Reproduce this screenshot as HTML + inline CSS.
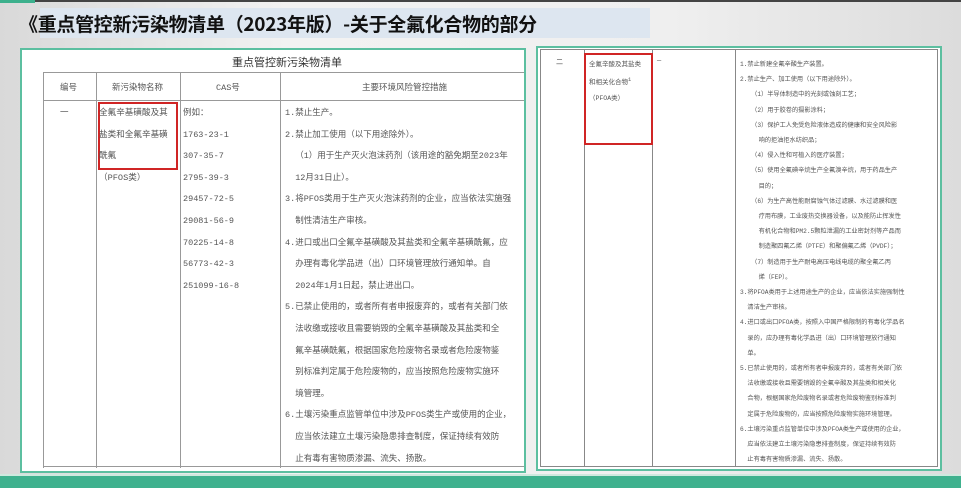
<!DOCTYPE html>
<html><head><meta charset="utf-8"><style>
*{margin:0;padding:0;box-sizing:border-box}
body{width:961px;height:488px;overflow:hidden;position:relative;background:linear-gradient(90deg,#d9d9d9,#f2f2f2 30%,#efefef 70%,#dcdcdc);font-family:"Liberation Sans","Noto Sans CJK SC",sans-serif}
.abs{position:absolute}
.t{position:absolute;font-family:"Liberation Mono","Noto Sans CJK SC",monospace;color:#555;white-space:nowrap}
</style></head><body>
<div class="abs" style="left:0;top:0;width:961px;height:2px;background:#444"></div>
<div class="abs" style="left:0;top:0;width:35px;height:3px;background:#3cb08c"></div>
<div class="abs" style="left:40px;top:8px;width:610px;height:30px;background:#dde6f0"></div>
<div class="abs" style="left:19px;top:10px;font-size:19px;font-weight:bold;color:#111;font-family:'Noto Sans CJK SC',sans-serif;letter-spacing:-0.3px">《重点管控新污染物清单（2023年版）-关于全氟化合物的部分</div>

<!-- left panel -->
<div class="abs" style="left:20px;top:48px;width:506px;height:425px;background:#fff;border:2px solid #5cbfa0"></div>
<div class="abs" style="left:43px;top:72px;width:481px;height:396px;border-left:1px solid #999;border-top:1px solid #999"></div>
<div class="abs" style="left:43px;top:100px;width:481px;height:1px;background:#999"></div>
<div class="abs" style="left:43px;top:466px;width:481px;height:1px;background:#999"></div>
<div class="abs" style="left:96px;top:72px;width:1px;height:396px;background:#999"></div>
<div class="abs" style="left:180px;top:72px;width:1px;height:396px;background:#999"></div>
<div class="abs" style="left:280px;top:72px;width:1px;height:396px;background:#999"></div>
<div class="abs" style="left:98px;top:102px;width:80px;height:68px;border:2px solid #d02525"></div>
<div class="t" style="left:232px;top:54px;font-size:11px;color:#333">重点管控新污染物清单</div>
<div class="t" style="left:60px;top:81px;font-size:8.5px">编号</div>
<div class="t" style="left:112px;top:81px;font-size:8.5px">新污染物名称</div>
<div class="t" style="left:216px;top:81px;font-size:8.5px">CAS号</div>
<div class="t" style="left:362px;top:81px;font-size:8.5px">主要环境风险管控措施</div>
<div class="t" style="left:60px;top:103px;font-size:8.5px;line-height:21.6px">一</div>
<div class="t" style="left:99px;top:103px;font-size:8.6px;line-height:21.6px">全氟辛基磺酸及其<br>盐类和全氟辛基磺<br>酰氟<br>（PFOS类）</div>
<div class="t" style="left:183px;top:103px;font-size:8.5px;line-height:21.6px">例如：<br>1763-23-1<br>307-35-7<br>2795-39-3<br>29457-72-5<br>29081-56-9<br>70225-14-8<br>56773-42-3<br>251099-16-8</div>
<div class="t" style="left:285px;top:103px;font-size:8.5px;line-height:21.6px">1.禁止生产。<br>2.禁止加工使用（以下用途除外）。<br>&nbsp;&nbsp;（1）用于生产灭火泡沫药剂（该用途的豁免期至2023年<br>&nbsp;&nbsp;12月31日止）。<br>3.将PFOS类用于生产灭火泡沫药剂的企业，应当依法实施强<br>&nbsp;&nbsp;制性清洁生产审核。<br>4.进口或出口全氟辛基磺酸及其盐类和全氟辛基磺酰氟，应<br>&nbsp;&nbsp;办理有毒化学品进（出）口环境管理放行通知单。自<br>&nbsp;&nbsp;2024年1月1日起，禁止进出口。<br>5.已禁止使用的，或者所有者申报废弃的，或者有关部门依<br>&nbsp;&nbsp;法收缴或接收且需要销毁的全氟辛基磺酸及其盐类和全<br>&nbsp;&nbsp;氟辛基磺酰氟，根据国家危险废物名录或者危险废物鉴<br>&nbsp;&nbsp;别标准判定属于危险废物的，应当按照危险废物实施环<br>&nbsp;&nbsp;境管理。<br>6.土壤污染重点监管单位中涉及PFOS类生产或使用的企业，<br>&nbsp;&nbsp;应当依法建立土壤污染隐患排查制度，保证持续有效防<br>&nbsp;&nbsp;止有毒有害物质渗漏、流失、扬散。</div>

<!-- right panel -->
<div class="abs" style="left:536px;top:46px;width:406px;height:425px;background:#fff;border:2px solid #5cbfa0"></div>
<div class="abs" style="left:540px;top:49px;width:398px;height:418px;border:1px solid #888"></div>
<div class="abs" style="left:584px;top:49px;width:1px;height:418px;background:#888"></div>
<div class="abs" style="left:652px;top:49px;width:1px;height:418px;background:#888"></div>
<div class="abs" style="left:735px;top:49px;width:1px;height:418px;background:#888"></div>
<div class="abs" style="left:584px;top:53px;width:69px;height:92px;border:2px solid #d02525"></div>
<div class="t" style="left:556px;top:57px;font-size:7px">二</div>
<div class="t" style="left:589px;top:57px;font-size:6.5px;line-height:15.3px">全氟辛酸及其盐类<br>和相关化合物<sup>1</sup><br>（PFOA类）</div>
<div class="t" style="left:657px;top:57px;font-size:7px">—</div>
<div class="t" style="left:740px;top:57px;font-size:6.2px;line-height:15.2px">1.禁止新建全氟辛酸生产装置。<br>2.禁止生产、加工使用（以下用途除外）。<br>&nbsp;&nbsp;&nbsp;（1）半导体制造中的光刻或蚀刻工艺；<br>&nbsp;&nbsp;&nbsp;（2）用于胶卷的摄影涂料；<br>&nbsp;&nbsp;&nbsp;（3）保护工人免受危险液体造成的健康和安全风险影<br>&nbsp;&nbsp;&nbsp;&nbsp;&nbsp;响的拒油拒水纺织品；<br>&nbsp;&nbsp;&nbsp;（4）侵入性和可植入的医疗装置；<br>&nbsp;&nbsp;&nbsp;（5）使用全氟碘辛烷生产全氟溴辛烷，用于药品生产<br>&nbsp;&nbsp;&nbsp;&nbsp;&nbsp;目的；<br>&nbsp;&nbsp;&nbsp;（6）为生产高性能耐腐蚀气体过滤膜、水过滤膜和医<br>&nbsp;&nbsp;&nbsp;&nbsp;&nbsp;疗用布膜，工业废热交换器设备，以及能防止挥发性<br>&nbsp;&nbsp;&nbsp;&nbsp;&nbsp;有机化合物和PM2.5颗粒泄漏的工业密封剂等产品而<br>&nbsp;&nbsp;&nbsp;&nbsp;&nbsp;制造聚四氟乙烯（PTFE）和聚偏氟乙烯（PVDF）；<br>&nbsp;&nbsp;&nbsp;（7）制造用于生产耐电高压电线电缆的聚全氟乙丙<br>&nbsp;&nbsp;&nbsp;&nbsp;&nbsp;烯（FEP）。<br>3.将PFOA类用于上述用途生产的企业，应当依法实施强制性<br>&nbsp;&nbsp;清洁生产审核。<br>4.进口或出口PFOA类，按照入中国严格限制的有毒化学品名<br>&nbsp;&nbsp;录的，应办理有毒化学品进（出）口环境管理放行通知<br>&nbsp;&nbsp;单。<br>5.已禁止使用的，或者所有者申报废弃的，或者有关部门依<br>&nbsp;&nbsp;法收缴或接收且需要销毁的全氟辛酸及其盐类和相关化<br>&nbsp;&nbsp;合物，根据国家危险废物名录或者危险废物鉴别标准判<br>&nbsp;&nbsp;定属于危险废物的，应当按照危险废物实施环境管理。<br>6.土壤污染重点监管单位中涉及PFOA类生产或使用的企业，<br>&nbsp;&nbsp;应当依法建立土壤污染隐患排查制度，保证持续有效防<br>&nbsp;&nbsp;止有毒有害物质渗漏、流失、扬散。</div>

<div class="abs" style="left:0;top:476px;width:961px;height:12px;background:#3fb18e"></div>
<div class="abs" style="left:0;top:474px;width:961px;height:2px;background:#cfe9df"></div>
</body></html>
